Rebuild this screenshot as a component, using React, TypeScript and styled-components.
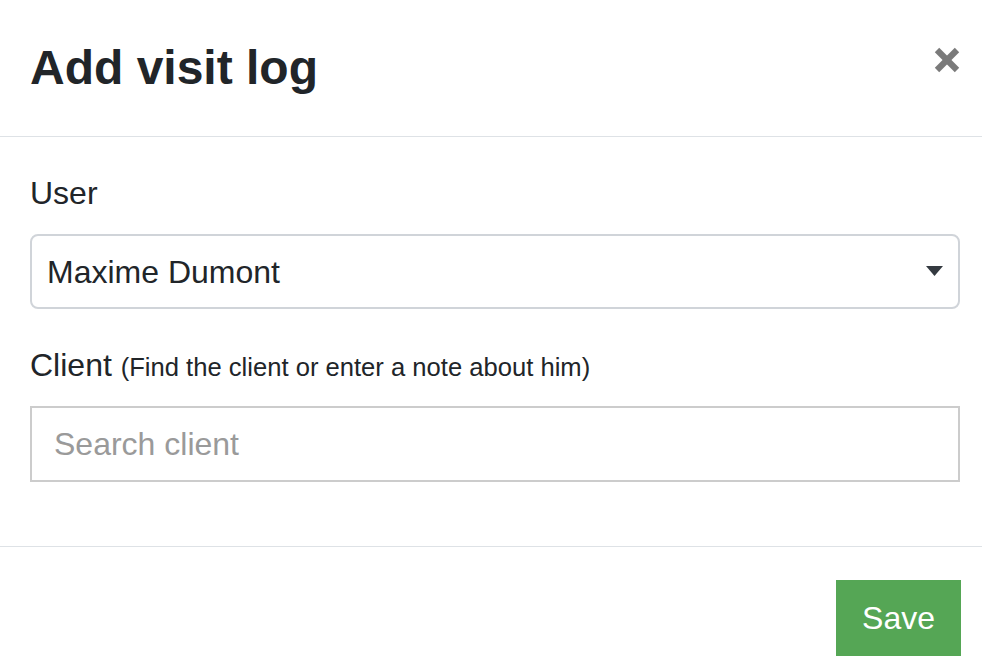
import React from "react";
import styled, { createGlobalStyle } from "styled-components";

const Global = createGlobalStyle`
  html, body { margin: 0; padding: 0; background: #fff; }
  body {
    font-family: "Liberation Sans", Arial, Helvetica, sans-serif;
    color: #212529;
    font-size: 32px;
    line-height: 1.5;
  }
  * { box-sizing: border-box; }
`;

const Modal = styled.div`
  width: 982px;
  height: 672px;
  overflow: hidden;
  background: #fff;
  display: flex;
  flex-direction: column;
`;

const Header = styled.div`
  display: flex;
  justify-content: space-between;
  align-items: flex-start;
  padding: 32px 22px 32px 30px;
  border-bottom: 1px solid #dee2e6;
`;

const Title = styled.h4`
  margin: 0;
  font-size: 48px;
  line-height: 72px;
  font-weight: 700;
  color: #212529;
`;

const CloseButton = styled.button`
  border: 0;
  background: transparent;
  padding: 0;
  margin: 15px 0 0 0;
  width: 26px;
  height: 26px;
  display: flex;
  cursor: pointer;
`;

const Body = styled.div`
  padding: 32px 22px 32px 30px;
  display: flex;
  flex-direction: column;
`;

const Group = styled.div`
  display: flex;
  flex-direction: column;
  margin-bottom: 32px;
`;

const Label = styled.label<{ $gap: number }>`
  font-size: 32px;
  line-height: 48px;
  margin-bottom: ${(p) => p.$gap}px;
  color: #212529;
`;

const Hint = styled.small`
  font-size: 25.6px;
`;

const SelectWrap = styled.div`
  position: relative;
  width: 100%;
`;

const Select = styled.select`
  appearance: none;
  -webkit-appearance: none;
  width: 100%;
  height: 75px;
  border: 2px solid #d0d4d9;
  border-radius: 8px;
  background: #fff;
  padding: 0 60px 0 15px;
  font-family: inherit;
  font-size: 32px;
  color: #212529;
  outline: none;
`;

const Caret = styled.svg`
  position: absolute;
  right: 17px;
  top: 32px;
  pointer-events: none;
`;

const Input = styled.input`
  width: 100%;
  height: 76px;
  border: 2px solid #cccccc;
  border-radius: 0;
  padding: 0 22px;
  font-family: inherit;
  font-size: 32px;
  color: #212529;
  outline: none;
  &::placeholder { color: #9a9a9a; }
`;

const Footer = styled.div`
  border-top: 1px solid #dee2e6;
  padding: 33px 21px 16px 30px;
  display: flex;
  justify-content: flex-end;
`;

const SaveButton = styled.button`
  height: 76px;
  width: 125px;
  border: 0;
  border-radius: 0;
  background: #55a655;
  color: #fff;
  font-family: inherit;
  font-size: 32px;
  cursor: pointer;
`;

export default function App() {
  return (
    <>
      <Global />
      <Modal>
        <Header>
          <Title>Add visit log</Title>
          <CloseButton aria-label="Close">
            <svg width="26" height="26" viewBox="0 0 26 26">
              <line x1="3" y1="3" x2="23" y2="23" stroke="#7a7a7a" strokeWidth="6.2" />
              <line x1="23" y1="3" x2="3" y2="23" stroke="#7a7a7a" strokeWidth="6.2" />
            </svg>
          </CloseButton>
        </Header>
        <Body>
          <Group>
            <Label $gap={17}>User</Label>
            <SelectWrap>
              <Select defaultValue="maxime">
                <option value="maxime">Maxime Dumont</option>
              </Select>
              <Caret width="17" height="10" viewBox="0 0 17 10">
                <polygon points="0,0 17,0 8.5,10" fill="#343a40" />
              </Caret>
            </SelectWrap>
          </Group>
          <Group>
            <Label $gap={15}>
              Client <Hint>(Find the client or enter a note about him)</Hint>
            </Label>
            <Input placeholder="Search client" />
          </Group>
        </Body>
        <Footer>
          <SaveButton>Save</SaveButton>
        </Footer>
      </Modal>
    </>
  );
}
